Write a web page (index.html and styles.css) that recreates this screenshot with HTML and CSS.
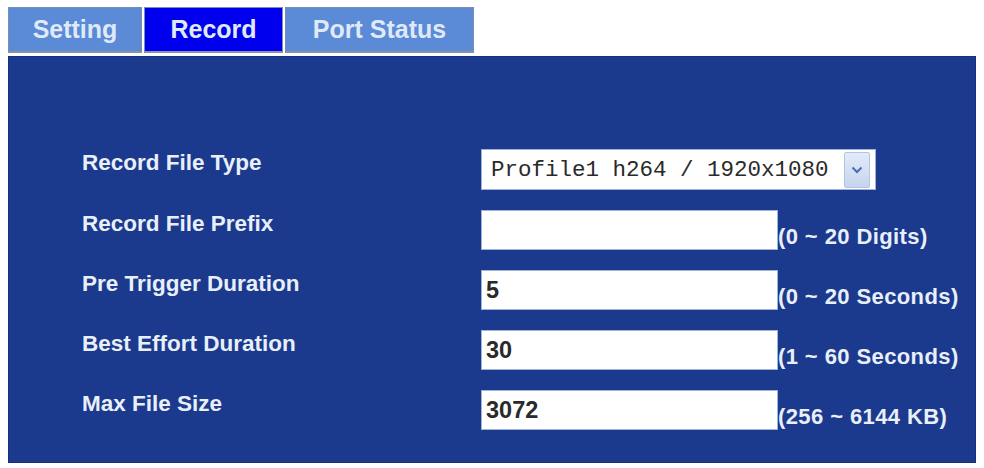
FILE: index.html
```html
<!DOCTYPE html>
<html lang="en">
<head>
    <meta charset="UTF-8">
    <meta name="viewport" content="width=device-width, initial-scale=1.0">
    <title>Record</title>
    <link rel="stylesheet" href="styles.css">
</head>
<body>
    <div class="tabs">
        <a class="tab tab-setting" href="#">Setting</a>
        <a class="tab tab-record active" href="#">Record</a>
        <a class="tab tab-port" href="#">Port Status</a>
    </div>

    <form class="panel" id="recordForm">
        <div class="row">
            <label for="fileType">Record File Type</label>
            <div class="select-box">
                <select id="fileType" name="fileType">
                    <option>Profile1 h264 / 1920x1080</option>
                    <option>Profile2 h264 / 1280x720</option>
                    <option>Profile3 mjpeg / 640x480</option>
                </select>
                <span class="select-arrow">
                    <svg width="12" height="8" viewBox="0 0 12 8"><path d="M1.5 1.5 L6 6 L10.5 1.5" fill="none" stroke="#4a6db4" stroke-width="2"/></svg>
                </span>
            </div>
        </div>

        <div class="row">
            <label for="filePrefix">Record File Prefix</label>
            <input type="text" id="filePrefix" name="filePrefix" value="">
            <span class="hint">(0 ~ 20 Digits)</span>
        </div>

        <div class="row">
            <label for="preTrigger">Pre Trigger Duration</label>
            <input type="text" id="preTrigger" name="preTrigger" value="5">
            <span class="hint">(0 ~ 20 Seconds)</span>
        </div>

        <div class="row">
            <label for="bestEffort">Best Effort Duration</label>
            <input type="text" id="bestEffort" name="bestEffort" value="30">
            <span class="hint">(1 ~ 60 Seconds)</span>
        </div>

        <div class="row">
            <label for="maxSize">Max File Size</label>
            <input type="text" id="maxSize" name="maxSize" value="3072">
            <span class="hint">(256 ~ 6144 KB)</span>
        </div>
    </form>
</body>
</html>
```

FILE: styles.css
```css
body {
    font-family: "Liberation Sans", Arial, sans-serif;
    margin: 0;
    padding: 7px 8px 0;
    background-color: #fff;
}

/* tab strip */
.tabs {
    display: flex;
    gap: 2px;
    width: 467px;
}

.tab {
    display: flex;
    align-items: center;
    justify-content: center;
    height: 43px;
    background-color: #5b8ad6;
    border: 1px solid #7a8fb4;
    border-bottom: 2px solid #8793a6;
    color: #dfe9f8;
    font-size: 25px;
    font-weight: bold;
    text-decoration: none;
    box-sizing: content-box;
}

.tab-setting {
    width: 132px;
}

.tab-record {
    width: 137px;
}

.tab-port {
    width: 187px;
}

.tab.active {
    background-color: #0000ee;
}

/* main panel */
.panel {
    margin-top: 3px;
    height: 407px;
    padding: 92px 0 0 73px;
    box-sizing: border-box;
    background-color: #1b3a8e;
    border: 1px solid #14307c;
    display: flex;
    flex-direction: column;
    gap: 20px;
}

.row {
    display: grid;
    grid-template-columns: 399px auto 1fr;
    align-items: start;
}

label {
    padding-top: 1px;
    color: #e9eff9;
    font-size: 22.5px;
    font-weight: bold;
    line-height: 26px;
}

input {
    width: 297px;
    height: 40px;
    margin: 0;
    padding: 0 4px;
    border: 1px solid #9fb3d6;
    box-sizing: border-box;
    background: #fff;
    color: #2a2a2a;
    font-family: "Liberation Sans", Arial, sans-serif;
    font-size: 23.5px;
    font-weight: bold;
}

.hint {
    align-self: end;
    color: #e9eff9;
    font-size: 22px;
    font-weight: bold;
    line-height: 26px;
    letter-spacing: 0.4px;
}

/* drop down */
.select-box {
    position: relative;
    width: 395px;
    height: 41px;
}

select {
    appearance: none;
    -webkit-appearance: none;
    width: 100%;
    height: 100%;
    margin: 0;
    padding: 0 0 0 9px;
    border: 1px solid #9fb3d6;
    border-radius: 0;
    background: #fff;
    color: #2a2a2a;
    font-family: "Liberation Mono", "Courier New", monospace;
    font-size: 22.5px;
}

.select-arrow {
    position: absolute;
    top: 3px;
    right: 6px;
    width: 24px;
    height: 34px;
    display: flex;
    align-items: center;
    justify-content: center;
    background: linear-gradient(#e3ebf8, #c5d5ef);
    border: 1px solid #b2c4e2;
    border-radius: 2px;
    pointer-events: none;
}
```
